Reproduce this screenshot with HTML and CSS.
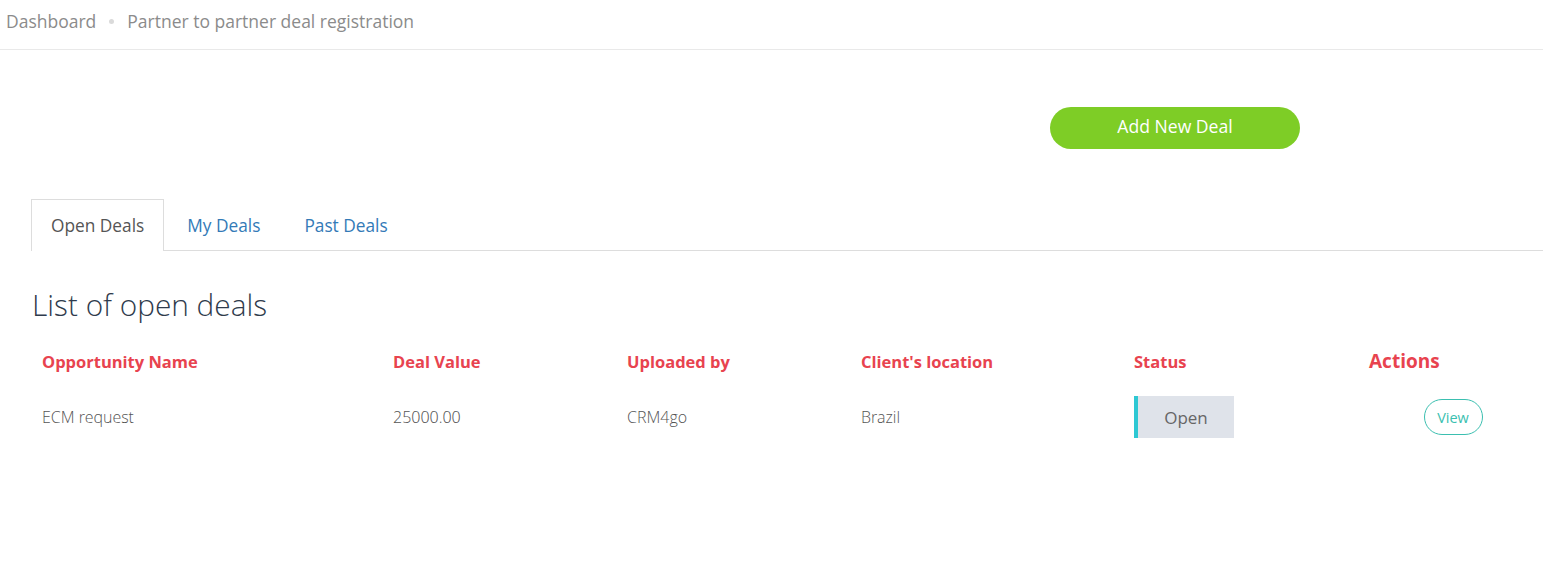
FILE: index.html
```html
<!DOCTYPE html>
<html>
<head>
<meta charset="utf-8">
<link rel="stylesheet" href="styles.css">
</head>
<body>
<div class="breadcrumb">
  <span class="crumb">Dashboard</span>
  <span class="sep"></span>
  <span class="crumb">Partner to partner deal registration</span>
</div>
<div class="actions-bar">
  <button class="btn-add">Add New Deal</button>
</div>
<ul class="tabs">
  <li class="tab active">Open Deals</li>
  <li class="tab">My Deals</li>
  <li class="tab">Past Deals</li>
</ul>
<h1 class="title">List of open deals</h1>
<div class="table">
  <div class="th">Opportunity Name</div>
  <div class="th">Deal Value</div>
  <div class="th">Uploaded by</div>
  <div class="th">Client's location</div>
  <div class="th">Status</div>
  <div class="th th-big">Actions</div>
  <div class="td">ECM request</div>
  <div class="td">25000.00</div>
  <div class="td">CRM4go</div>
  <div class="td">Brazil</div>
  <div class="td"><span class="status">Open</span></div>
  <div class="td td-center"><button class="btn-view">View</button></div>
</div>
</body>
</html>
```
FILE: styles.css
```css
* { box-sizing: border-box; }
body {
  margin: 0;
  font-family: "Open Sans", "Liberation Sans", sans-serif;
  background: #fff;
  color: #555;
}
.breadcrumb {
  height: 50px;
  border-bottom: 1px solid #e9e9e9;
  display: flex;
  align-items: center;
  padding: 0 0 8px 6px;
  gap: 12px;
  font-size: 17.5px;
  color: #8b8b8b;
}
.sep {
  width: 5px;
  height: 5px;
  border-radius: 50%;
  background: #dadada;
  margin: 2px 1px 0;
}
.actions-bar {
  display: flex;
  padding: 57px 0 0 1050px;
}
.btn-add {
  width: 250px;
  height: 42px;
  border: none;
  border-radius: 21px;
  background: #7ecd26;
  color: #fff;
  font-family: inherit;
  font-size: 17.6px;
  padding: 0 0 4px;
}
.tabs {
  list-style: none;
  margin: 50px 0 0 31px;
  padding: 0;
  display: flex;
  border-bottom: 1px solid #ddd;
}
.tab {
  height: 52px;
  padding: 0 20px;
  line-height: 51px;
  font-size: 17.3px;
  color: #337ab7;
  border: 1px solid transparent;
  border-bottom: none;
  margin-bottom: -1px;
  margin-right: 2px;
}
.tab.active {
  border-color: #ddd;
  background: #fff;
  color: #555;
  padding: 0 19px;
}
.title {
  margin: 34px 0 0 32px;
  font-family: "Open Sans Light", "Open Sans", sans-serif;
  font-weight: 300;
  font-size: 29.8px;
  color: #2f3b4c;
  line-height: 40px;
}
.table {
  margin: 16px 0 0 32px;
  display: grid;
  grid-template-columns: 351px 234px 234px 273px 235px 1fr;
}
.th {
  padding: 0 10px;
  height: 40px;
  display: flex;
  align-items: center;
  font-weight: 700;
  font-size: 16.5px;
  color: #e8434f;
}
.th-big { font-size: 19px; }
.td {
  padding: 0 10px;
  height: 72px;
  display: flex;
  align-items: center;
  font-family: "Open Sans Light", "Open Sans", sans-serif;
  font-weight: 300;
  font-size: 16px;
  color: #555;
}
.td-center { justify-content: center; padding-left: 12px; padding-right: 8px; }
.status {
  display: inline-flex;
  align-items: center;
  justify-content: center;
  width: 100px;
  height: 42px;
  background: #dfe3ea;
  border-left: 4px solid #2ec8d3;
  font-family: "Open Sans", sans-serif;
  font-weight: 400;
  font-size: 17px;
  color: #666;
}
.btn-view {
  width: 59px;
  height: 36px;
  border: 1px solid #3bbfb0;
  border-radius: 18px;
  background: #fff;
  color: #3bbfb0;
  font-family: "Open Sans", sans-serif;
  font-size: 14.5px;
  padding: 0;
}
```
